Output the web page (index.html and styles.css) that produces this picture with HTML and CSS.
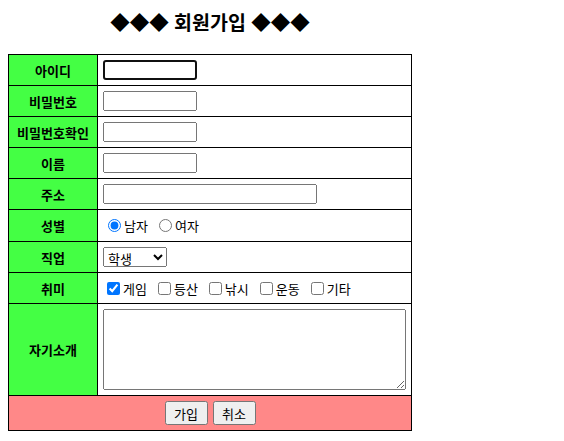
FILE: index.html
```html
<!DOCTYPE html>
<html lang="ko">

<head>
    <meta charset="UTF-8">
    <meta name="viewport" content="width=device-width, initial-scale=1.0">
    <title>회원가입</title>
    <link rel="stylesheet" href="styles.css">
</head>

<body>
    <form class="join-form" action="#">
        <h2 class="join-title">◆◆◆ 회원가입 ◆◆◆</h2>
        <table class="join-table">
            <tr>
                <th>아이디</th>
                <td><input type="text" name="id" class="field field-short field-focus"></td>
            </tr>
            <tr>
                <th>비밀번호</th>
                <td><input type="password" name="pw" class="field field-short"></td>
            </tr>
            <tr>
                <th>비밀번호확인</th>
                <td><input type="password" name="pw2" class="field field-short"></td>
            </tr>
            <tr>
                <th>이름</th>
                <td><input type="text" name="name" class="field field-short"></td>
            </tr>
            <tr>
                <th>주소</th>
                <td><input type="text" name="addr" class="field field-long"></td>
            </tr>
            <tr class="row-tall">
                <th>성별</th>
                <td>
                    <div class="choice-list radio-list">
                        <label class="choice"><input type="radio" name="gender" value="m" checked>남자</label>
                        <label class="choice"><input type="radio" name="gender" value="f">여자</label>
                    </div>
                </td>
            </tr>
            <tr>
                <th>직업</th>
                <td>
                    <select name="job" class="job-select">
                        <option>학생</option>
                        <option>회사원</option>
                        <option>주부</option>
                        <option>기타</option>
                    </select>
                </td>
            </tr>
            <tr>
                <th>취미</th>
                <td>
                    <div class="choice-list check-list">
                        <label class="choice"><input type="checkbox" name="hobby" value="game" checked>게임</label>
                        <label class="choice"><input type="checkbox" name="hobby" value="hike">등산</label>
                        <label class="choice"><input type="checkbox" name="hobby" value="fish">낚시</label>
                        <label class="choice"><input type="checkbox" name="hobby" value="sport">운동</label>
                        <label class="choice"><input type="checkbox" name="hobby" value="etc">기타</label>
                    </div>
                </td>
            </tr>
            <tr>
                <th>자기소개</th>
                <td><textarea name="intro" class="intro"></textarea></td>
            </tr>
            <tr>
                <td colspan="2" class="actions-cell">
                    <div class="actions">
                        <button type="submit" class="btn">가입</button>
                        <button type="reset" class="btn">취소</button>
                    </div>
                </td>
            </tr>
        </table>
    </form>
</body>

</html>
```

FILE: styles.css
```css
body {
    margin: 8px;
    font-family: "Noto Sans CJK KR", "Noto Sans", sans-serif;
    background-color: #fff;
    color: #000;
}

.join-form {
    width: 404px;
}

.join-title {
    margin: 0 0 18px;
    font-size: 19.5px;
    line-height: 28px;
    text-align: center;
}

.join-table {
    width: 404px;
    border-collapse: collapse;
    font-size: 13px;
}

.join-table th,
.join-table td {
    border: 1px solid #000;
    padding: 5px;
    height: 20px;
}

.join-table .row-tall th,
.join-table .row-tall td {
    height: 21px;
}

.join-table th {
    width: 78px;
    background-color: #44ff44;
    text-align: center;
    font-weight: bold;
}

.field,
.job-select,
.intro,
.btn {
    font-family: "Noto Sans CJK KR", sans-serif;
    font-size: 13px;
    box-sizing: border-box;
    vertical-align: middle;
}

.field {
    height: 20px;
    margin: 0;
    display: block;
}

.field-short {
    width: 94px;
}

.field-long {
    width: 214px;
}

.field-focus {
    border: 2px solid #101010;
    border-radius: 3px;
    outline: none;
}

.choice-list {
    display: flex;
    align-items: center;
}

.radio-list {
    gap: 6px;
}

.check-list {
    gap: 8px;
}

.choice {
    display: inline-flex;
    align-items: center;
}

.radio-list input {
    margin: 0 3px 0 5px;
}

.check-list input {
    margin: 0 3px 0 4px;
}

.check-list .choice + .choice input {
    margin-left: 3px;
}

.job-select {
    width: 64px;
    height: 20px;
    margin: 0;
    display: block;
}

.intro {
    width: 303px;
    height: 81px;
    margin: 0;
    display: block;
}

.actions-cell {
    background-color: #ff8888;
}

.actions {
    display: flex;
    justify-content: center;
    gap: 5px;
}

.btn {
    width: 43px;
    height: 24px;
    padding: 0;
}
```
